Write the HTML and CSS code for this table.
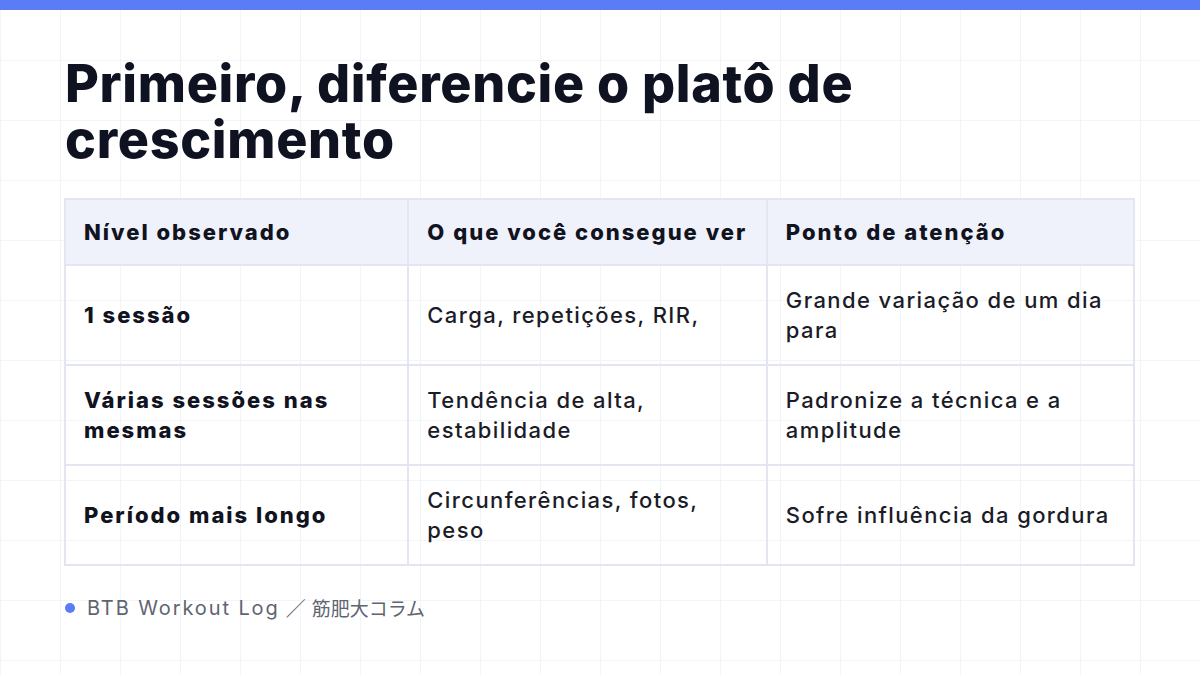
FILE: index.html
```html
<!DOCTYPE html>
<html lang="pt">
<head>
    <meta charset="UTF-8" />
    <meta name="viewport" content="width=device-width, initial-scale=1.0" />
    <title>Platô de crescimento</title>
    <link rel="stylesheet" href="styles.css">
</head>
<body>

<div class="top-bar"></div>

<div class="slide">
    <h1>Primeiro, diferencie o platô de crescimento</h1>

    <table class="compare">
        <colgroup>
            <col class="col-a">
            <col class="col-b">
            <col class="col-c">
        </colgroup>
        <thead>
            <tr>
                <th>Nível observado</th>
                <th>O que você consegue ver</th>
                <th>Ponto de atenção</th>
            </tr>
        </thead>
        <tbody>
            <tr>
                <td class="level">1 sessão</td>
                <td>Carga, repetições, RIR,</td>
                <td>Grande variação de um dia para</td>
            </tr>
            <tr>
                <td class="level">Várias sessões nas mesmas</td>
                <td>Tendência de alta, estabilidade</td>
                <td>Padronize a técnica e a amplitude</td>
            </tr>
            <tr>
                <td class="level">Período mais longo</td>
                <td>Circunferências, fotos, peso</td>
                <td>Sofre influência da gordura</td>
            </tr>
        </tbody>
    </table>

    <div class="footer">
        <span class="dot"></span>
        <span class="brand">BTB Workout Log</span>
        <span class="sep">／</span>
        <span class="column">筋肥大コラム</span>
    </div>
</div>

</body>
</html>
```

FILE: styles.css
```css
/* General */
body {
    margin: 0;
    width: 1200px;
    height: 675px;
    overflow: hidden;
    font-family: 'Inter', 'Noto Sans CJK JP', sans-serif;
    color: #11131f;
    background-color: #ffffff;
    background-image:
        linear-gradient(to right, #f3f4f7 1px, transparent 1px),
        linear-gradient(to bottom, #f3f4f7 1px, transparent 1px);
    background-size: 60px 60px;
}

.top-bar {
    height: 10px;
    background: #5b7cf7;
}

.slide {
    padding: 46px 65px 0 64px;
}

h1 {
    margin: 0 0 30px 1px;
    font-size: 52px;
    line-height: 56px;
    font-weight: 800;
    letter-spacing: 0.7px;
    color: #0f1220;
}

/* Table */
.compare {
    width: 100%;
    border-collapse: collapse;
    border: 2px solid #e3e5f1;
    font-size: 22px;
    line-height: 30px;
    letter-spacing: 1.4px;
}

.col-a { width: 344px; }
.col-b { width: 359px; }
.col-c { width: 368px; }

.compare th,
.compare td {
    border: 2px solid #e3e5f1;
    text-align: left;
    vertical-align: middle;
    padding: 19px 18px;
}

.compare th {
    background: #f0f2fb;
    font-weight: 800;
    letter-spacing: 2px;
    padding-top: 17px;
    padding-bottom: 17px;
}

.compare td {
    font-weight: 500;
    color: #1a1c28;
}

.compare td.level {
    font-weight: 800;
    letter-spacing: 2px;
    color: #11131f;
}

/* Footer */
.footer {
    margin-top: 27px;
    display: flex;
    align-items: center;
    font-size: 20px;
    color: #5f6472;
}

.dot {
    width: 10px;
    height: 10px;
    margin: 0 12px 0 1px;
    border-radius: 50%;
    background: #5b7cf7;
}

.brand {
    letter-spacing: 1.9px;
}

.sep {
    margin: 0 6px 0 6px;
}

.column {
    font-size: 19px;
}
```
